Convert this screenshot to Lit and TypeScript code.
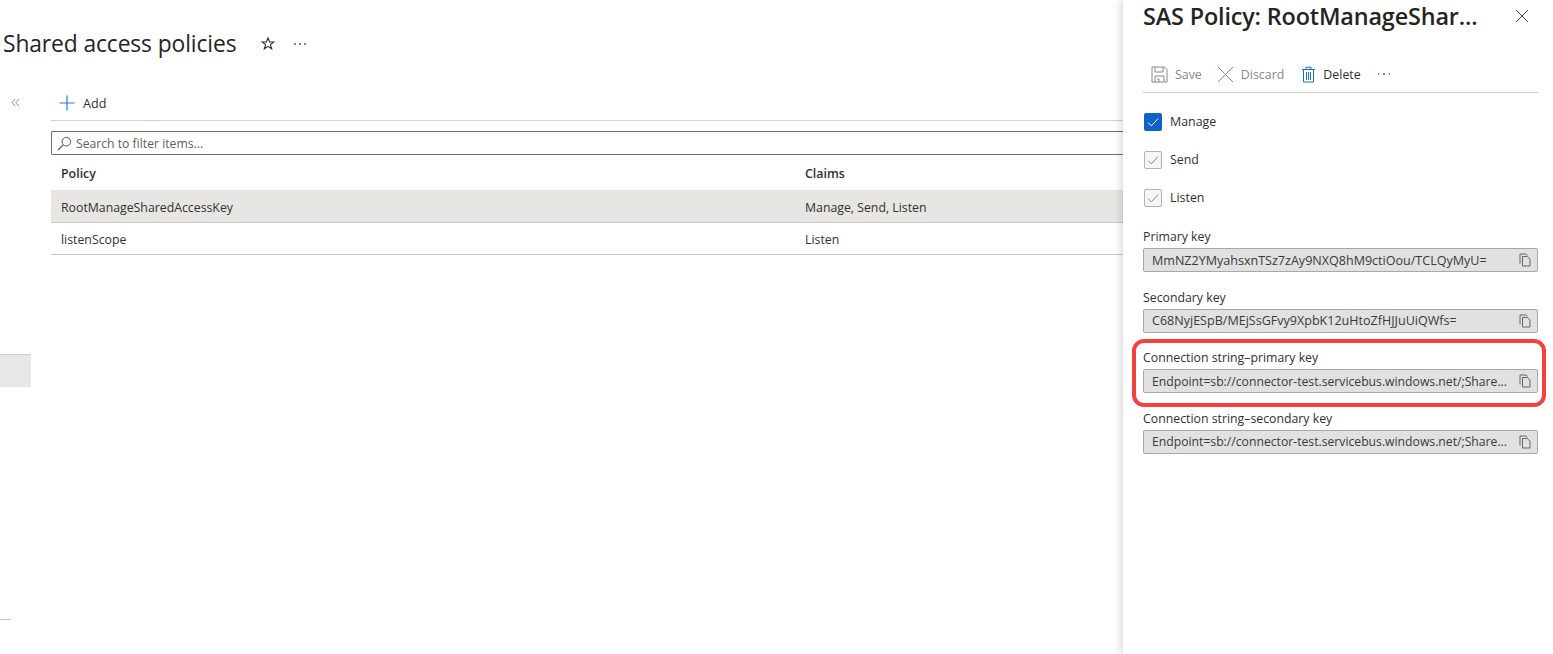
import { LitElement, html, css } from "lit";
import { customElement } from "lit/decorators.js";

const check = (c: string) => html`<svg viewBox="0 0 18 18" width="18" height="18"><path d="M4 9.5l3.4 3.4L14 5.6" fill="none" stroke="${c}" stroke-width="1"/></svg>`;
const copy = html`<svg class="copy" viewBox="0 0 12 14" width="12" height="14"><path d="M1 10.5V1h6l1.5 1.5" fill="none" stroke="#666" stroke-width="1"/><path d="M3.5 3.5h4.8L11 6.2V13H3.5z" fill="#e1e1e1" stroke="#666" stroke-width="1"/></svg>`;

@customElement("app-root")
export class AppRoot extends LitElement {
  static styles = css`
    :host { display: flex; width: 1553px; height: 654px; overflow: hidden; background: #fff; font-family: "Open Sans", "Noto Sans", sans-serif; font-size: 12.6px; color: #323130; }
    .main { width: 1123px; flex: none; display: flex; flex-direction: column; box-sizing: border-box; }
    .head { display: flex; align-items: center; height: 30px; margin-top: 29px; padding-left: 3px; }
    h1 { margin: 0; font-size: 22.8px; font-weight: 400; line-height: 30px; color: #252423; letter-spacing: -0.1px; white-space: nowrap; }
    .star { margin-left: 24px; display: block; }
    .more { margin-left: 18px; display: flex; gap: 3.5px; }
    .dot { width: 1.5px; height: 1.5px; border-radius: 50%; background: #666; }
    .body { display: flex; flex: 1; margin-top: 29px; }
    .rail { width: 51px; flex: none; display: flex; flex-direction: column; align-items: flex-start; }
    .collapse { margin: 10px 0 0 11px; display: block; }
    .navitem { margin-top: 247px; width: 31px; height: 33px; background: #e9e7e5; box-sizing: border-box; border-top: 1px solid #d0cecc; }
    .navline { margin-top: 232px; width: 11px; height: 1px; background: #c8c6c4; }
    .content { flex: 1; min-width: 0; }
    .tool { height: 33px; display: flex; align-items: center; border-bottom: 1px solid #d2d0ce; box-sizing: border-box; padding: 0 0 2px 8px; gap: 8px; color: #323130; }
    .search { margin-top: 10px; height: 24px; box-sizing: border-box; border: 1px solid #6f6e6d; border-right: 0; border-radius: 2px 0 0 2px; display: flex; align-items: center; padding-left: 5px; gap: 4px; color: #5f5e5d; font-size: 12.2px; }
    .row { display: grid; grid-template-columns: 744px 1fr; align-items: center; padding: 2px 0 0 10px; box-sizing: border-box; }
    .hdr { height: 35px; font-weight: 600; font-size: 12.4px; color: #323130; }
    .item { height: 32px; border-bottom: 1px solid #c9c7c5; font-size: 12.3px; color: #323130; }
    .sel { height: 33px; background: #e8e6e3; }
    .panel { flex: 1; min-width: 0; box-sizing: border-box; padding: 0 15px 0 20px; box-shadow: -2px 0 8px rgba(0,0,0,.16); position: relative; display: flex; flex-direction: column; }
    .phead { display: flex; align-items: center; justify-content: space-between; height: 30px; margin-top: 1px; }
    h2 { margin: 0; font-size: 23.4px; font-weight: 600; line-height: 30px; color: #252423; letter-spacing: -0.15px; white-space: nowrap; }
    .close { display: block; margin-right: 9px; }
    .cmd { margin-top: 27px; height: 35px; display: flex; align-items: center; border-bottom: 1px solid #d2d0ce; box-sizing: border-box; padding: 0 0 2px 8px; font-size: 12.4px; }
    .cmd svg { display: block; flex: none; }
    .dis { color: #8a8886; }
    .lab { margin-left: 7px; white-space: nowrap; }
    .x { margin-left: 15px; }
    .trash { margin-left: 17px; }
    .cmd .more { margin-left: 17px; gap: 4px; }
    .checks { display: flex; flex-direction: column; gap: 20px; margin-top: 20px; padding-left: 1px; }
    .ck { display: flex; align-items: center; gap: 8px; height: 18px; font-size: 12.4px; }
    .t { margin-top: -2px; }
    .box { width: 18px; height: 18px; box-sizing: border-box; border-radius: 2px; display: flex; align-items: center; justify-content: center; }
    .box svg { flex: none; }
    .on { background: #0f62c9; }
    .off { border: 1px solid #b5b3b1; background: #f7f6f5; }
    .fields { margin-top: 21px; display: flex; flex-direction: column; }
    .field { height: 60.6px; }
    .flabel { display: block; font-size: 12.3px; line-height: 18px; color: #323130; white-space: nowrap; }
    .inp { margin-top: 2px; height: 24px; box-sizing: border-box; background: #e1e1e1; border: 1px solid #a9a8a6; border-radius: 2px; display: flex; align-items: center; padding: 0 6px 0 8px; gap: 4px; font-size: 12.55px; color: #3b3a39; }
    .val { flex: 1; min-width: 0; overflow: hidden; white-space: nowrap; }
    .ep { font-size: 12.2px; }
    .copy { flex: none; }
    .callout { position: absolute; left: 9px; top: 339px; width: 414px; height: 68px; box-sizing: border-box; border: 4px solid #f4413f; border-radius: 12px; pointer-events: none; }
  `;

  field(label: string, value: string, cls = "val") {
    return html`<div class="field"><span class="flabel">${label}</span><div class="inp"><span class="${cls}">${value}</span>${copy}</div></div>`;
  }

  render() {
    const ep = "Endpoint=sb://connector-test.servicebus.windows.net/;Share...";
    return html`
      <div class="main">
        <div class="head">
          <h1>Shared access policies</h1>
          <svg class="star" viewBox="0 0 16 16" width="16" height="16"><path d="M8 2l1.6 4h4.2l-3.4 2.6 1.3 4.2L8 10.3l-3.7 2.5 1.3-4.2L2.2 6h4.2z" fill="none" stroke="#323130" stroke-width="1.1"/></svg>
          <div class="more"><span class="dot"></span><span class="dot"></span><span class="dot"></span></div>
        </div>
        <div class="body">
          <div class="rail">
            <svg class="collapse" viewBox="0 0 9 9" width="9" height="9"><path d="M4.2 1L1 4.5 4.2 8M8 1L4.8 4.5 8 8" fill="none" stroke="#77838f" stroke-width=".9"/></svg>
            <div class="navitem"></div>
            <div class="navline"></div>
          </div>
          <div class="content">
            <div class="tool">
              <svg viewBox="0 0 16 16" width="16" height="16"><path d="M8 .5v15M.5 8h15" stroke="#2a7cc4" stroke-width="1.2" fill="none"/></svg>
              <span>Add</span>
            </div>
            <div class="search">
              <svg viewBox="0 0 15 15" width="15" height="15"><circle cx="9.3" cy="5.7" r="4.3" fill="none" stroke="#555" stroke-width="1"/><path d="M6.2 8.8L1 14" stroke="#555" stroke-width="1.1"/></svg>
              <span>Search to filter items...</span>
            </div>
            <div class="row hdr"><span>Policy</span><span>Claims</span></div>
            <div class="row item sel"><span>RootManageSharedAccessKey</span><span>Manage, Send, Listen</span></div>
            <div class="row item"><span>listenScope</span><span>Listen</span></div>
          </div>
        </div>
      </div>
      <div class="panel">
        <div class="phead">
          <h2>SAS Policy: RootManageShar...</h2>
          <svg class="close" viewBox="0 0 14 14" width="14" height="14"><path d="M1 1l12 12M13 1L1 13" stroke="#444" stroke-width="1" fill="none"/></svg>
        </div>
        <div class="cmd">
          <svg viewBox="0 0 17 17" width="17" height="17"><path d="M1 1h12.5L16 3.5V16H1z M4 1v5h8V1 M4 16v-6h9v6 M6 13h2v3" fill="none" stroke="#8a8886" stroke-width="1"/></svg>
          <span class="lab dis">Save</span>
          <svg class="x" viewBox="0 0 17 17" width="17" height="17"><path d="M1 1l15 15M16 1L1 16" stroke="#8a8886" stroke-width="1" fill="none"/></svg>
          <span class="lab dis">Discard</span>
          <svg class="trash" viewBox="0 0 15 17" width="15" height="17"><path d="M2.5 3.5h10V16h-10zM1 3.5h13M5 3.5V1.2h5v2.3M5.5 6v8M7.5 6v8M9.5 6v8" fill="none" stroke="#1c6fc2" stroke-width="1"/></svg>
          <span class="lab">Delete</span>
          <div class="more"><span class="dot"></span><span class="dot"></span><span class="dot"></span></div>
        </div>
        <div class="checks">
          <div class="ck"><span class="box on">${check("#fff")}</span><span class="t">Manage</span></div>
          <div class="ck"><span class="box off">${check("#8a8886")}</span><span class="t">Send</span></div>
          <div class="ck"><span class="box off">${check("#8a8886")}</span><span class="t">Listen</span></div>
        </div>
        <div class="fields">
          ${this.field("Primary key", "MmNZ2YMyahsxnTSz7zAy9NXQ8hM9ctiOou/TCLQyMyU=")}
          ${this.field("Secondary key", "C68NyjESpB/MEjSsGFvy9XpbK12uHtoZfHJJuUiQWfs=")}
          ${this.field("Connection string–primary key", ep, "val ep")}
          ${this.field("Connection string–secondary key", ep, "val ep")}
        </div>
        <div class="callout"></div>
      </div>
    `;
  }
}
